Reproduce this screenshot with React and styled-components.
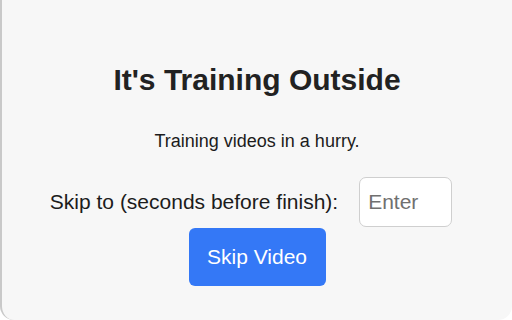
import React, { useState } from "react";
import styled, { createGlobalStyle } from "styled-components";

const GlobalStyle = createGlobalStyle`
  html, body {
    margin: 0;
    padding: 0;
    background: #ffffff;
  }
  body {
    font-family: "Liberation Sans", Arial, sans-serif;
  }
`;

const Popup = styled.div`
  box-sizing: border-box;
  width: 512px;
  height: 320px;
  background: #f7f7f7;
  border-left: 2px solid #c9c9c9;
  border-bottom-left-radius: 14px;
  border-bottom-right-radius: 14px;
  display: flex;
  flex-direction: column;
  align-items: center;
  padding-top: 62px;
  color: #222;
`;

const Title = styled.h1`
  margin: 0;
  font-size: 30px;
  font-weight: 700;
  line-height: 36px;
  color: #222;
`;

const Tagline = styled.p`
  margin: 32px 0 0;
  font-size: 18px;
  line-height: 22px;
  color: #1c1c1c;
`;

const SkipRow = styled.div`
  display: flex;
  align-items: center;
  gap: 21px;
  margin-top: 25px;
  margin-left: -12px;
`;

const Label = styled.label`
  font-size: 21px;
  color: #1c1c1c;
`;

const SecondsInput = styled.input`
  box-sizing: border-box;
  width: 93px;
  height: 50px;
  border: 1.5px solid #cfcfcf;
  border-radius: 7px;
  background: #fff;
  padding: 0 8px;
  font-family: inherit;
  font-size: 21px;
  color: #222;
  outline: none;

  &::placeholder {
    color: #707070;
  }
`;

const SkipButton = styled.button`
  box-sizing: border-box;
  width: 137px;
  height: 58px;
  margin-top: 1px;
  border: none;
  border-radius: 6px;
  background: #3478f6;
  color: #fff;
  font-family: inherit;
  font-size: 21px;
  cursor: pointer;
`;

export default function App() {
  const [seconds, setSeconds] = useState("");

  return (
    <>
      <GlobalStyle />
      <Popup>
        <Title>It's Training Outside</Title>
        <Tagline>Training videos in a hurry.</Tagline>
        <SkipRow>
          <Label htmlFor="seconds">Skip to (seconds before finish):</Label>
          <SecondsInput
            id="seconds"
            placeholder="Enter"
            value={seconds}
            onChange={(e) => setSeconds(e.target.value)}
          />
        </SkipRow>
        <SkipButton>Skip Video</SkipButton>
      </Popup>
    </>
  );
}
